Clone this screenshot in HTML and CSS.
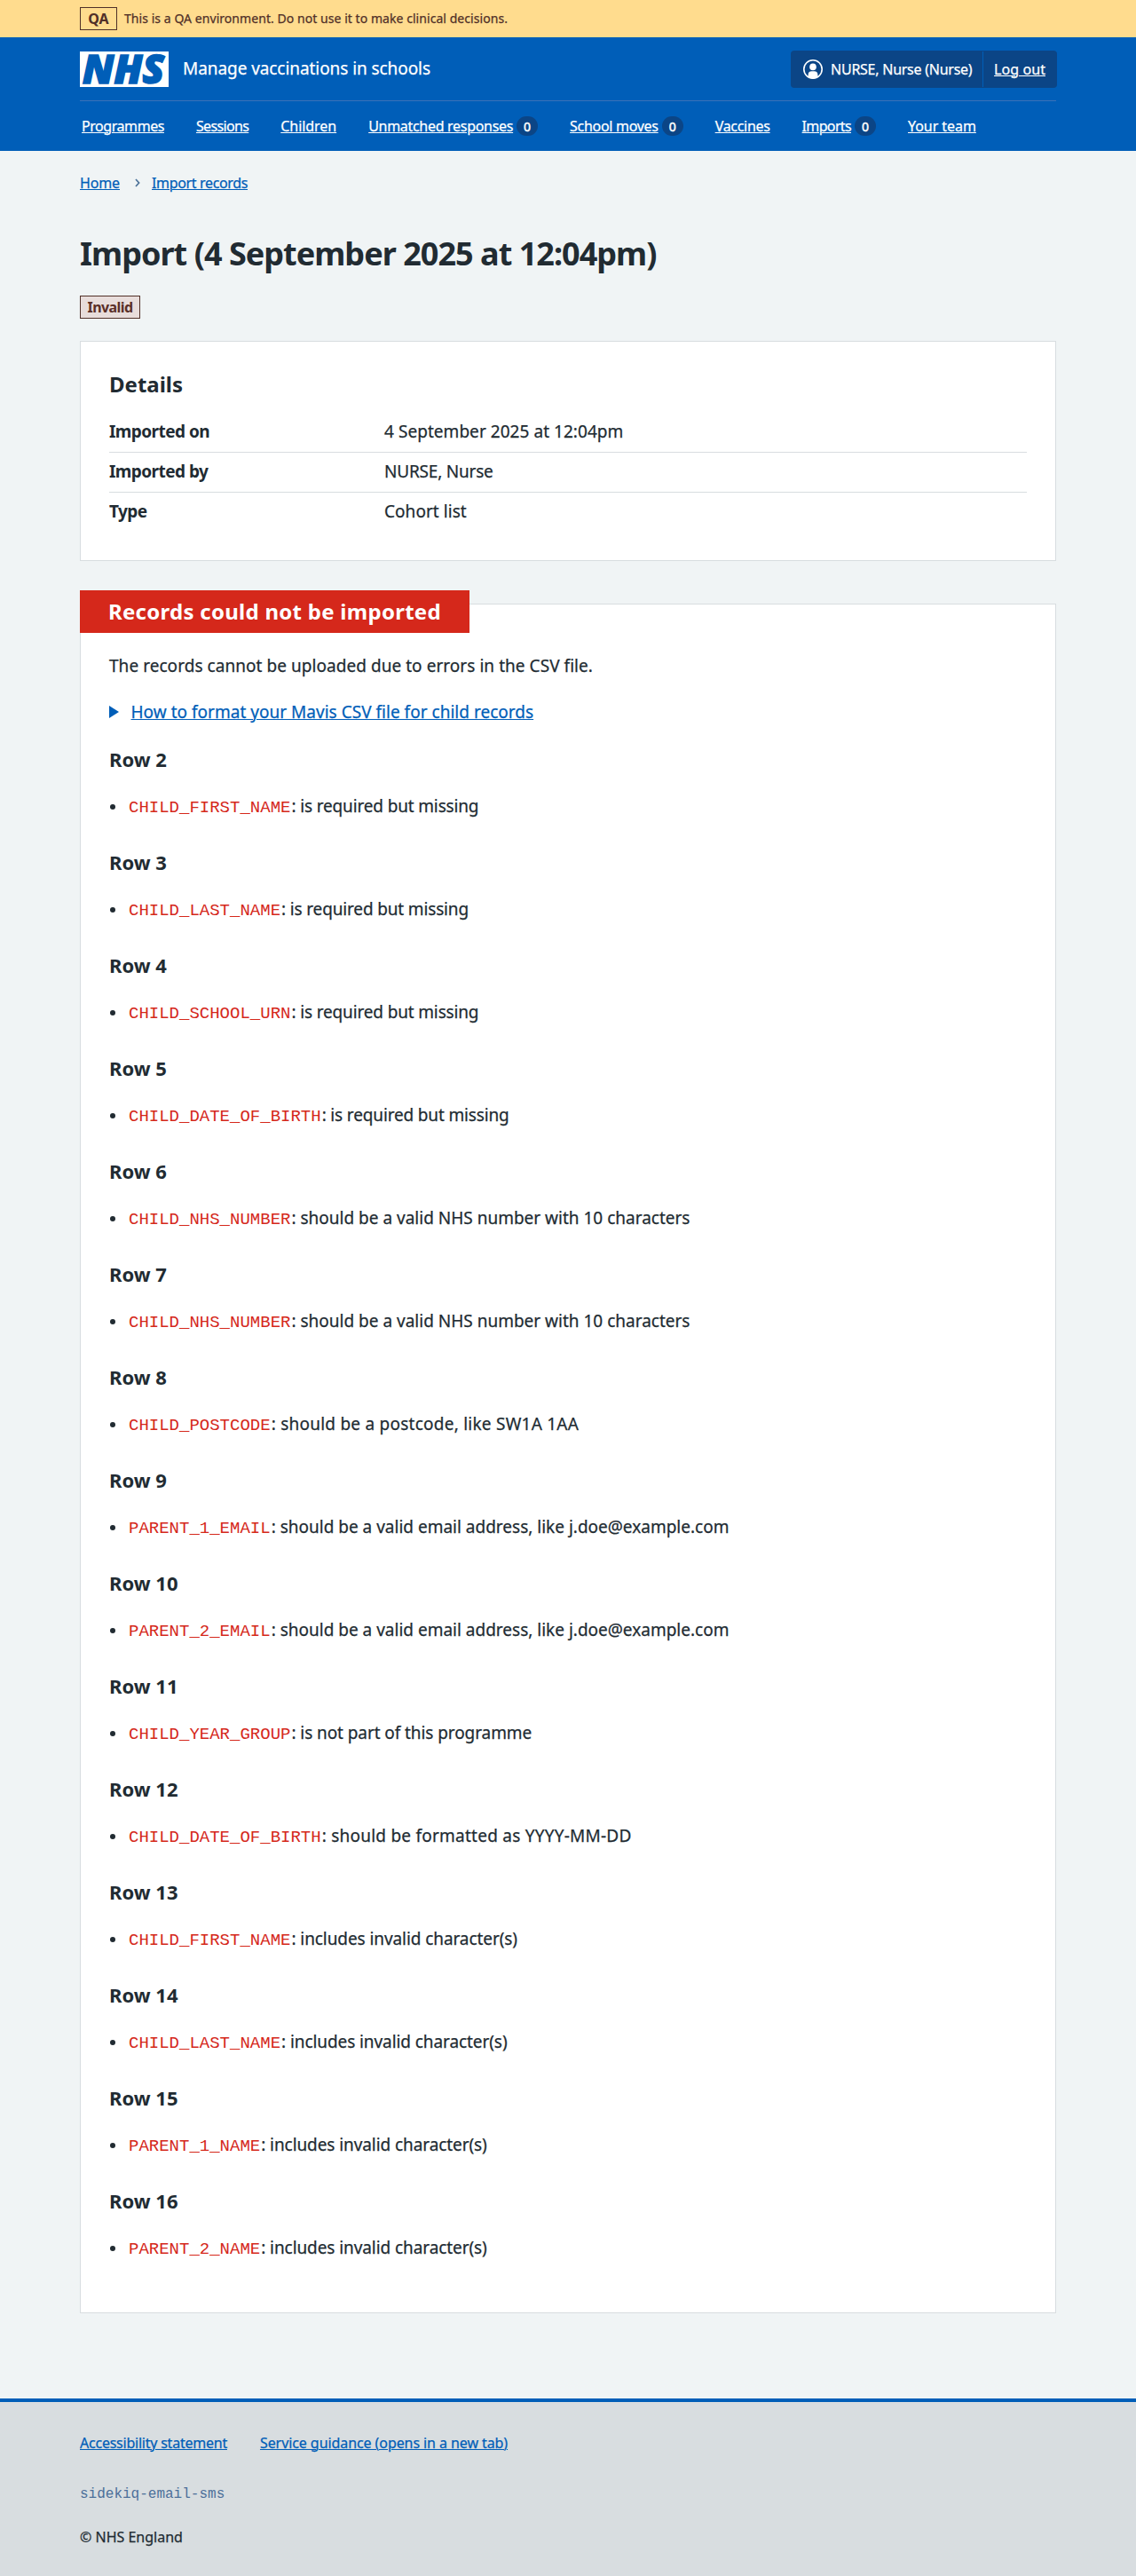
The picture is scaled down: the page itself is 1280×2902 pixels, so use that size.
FILE: index.html
```html
<!DOCTYPE html>
<html lang="en">
<head>
<meta charset="utf-8">
<title>Import (4 September 2025 at 12:04pm) - Manage vaccinations in schools</title>
<link rel="stylesheet" href="styles.css">
</head>
<body>
<div class="environment">
  <div class="container environment-inner">
    <strong class="environment-tag">QA</strong>
    <span class="environment-text">This is a QA environment. Do not use it to make clinical decisions.</span>
  </div>
</div>

<header class="header">
  <div class="container">
    <div class="header-top">
      <a class="header-service" href="#">
        <svg class="logo" width="100" height="40" viewBox="0 0 100 40" role="img" aria-label="NHS">
          <rect width="100" height="40" fill="#fff"/>
          <text class="logo-text" x="3" y="36" textLength="92" lengthAdjust="spacingAndGlyphs">NHS</text>
        </svg>
        <span class="service-name">Manage vaccinations in schools</span>
      </a>
      <div class="account">
        <div class="account-user">
          <svg class="account-icon" width="22" height="22" viewBox="0 0 22 22" aria-hidden="true">
            <circle cx="11" cy="11" r="10.2" fill="none" stroke="#fff" stroke-width="1.6"/>
            <circle cx="11" cy="8.4" r="3.8" fill="#fff"/>
            <path d="M5.6 20V17.2a4 4 0 0 1 4-4h2.8a4 4 0 0 1 4 4V20a10.3 10.3 0 0 1-10.8 0z" fill="#fff"/>
          </svg>
          <span class="account-name">NURSE, Nurse (Nurse)</span>
        </div>
        <a class="account-logout" href="#">Log out</a>
      </div>
    </div>
    <nav class="nav">
      <a class="nav-item" href="#"><span>Programmes</span></a>
      <a class="nav-item nav-tight" href="#"><span>Sessions</span></a>
      <a class="nav-item nav-natural" href="#"><span>Children</span></a>
      <a class="nav-item" href="#"><span>Unmatched responses</span><b class="badge">0</b></a>
      <a class="nav-item" href="#"><span>School moves</span><b class="badge">0</b></a>
      <a class="nav-item" href="#"><span>Vaccines</span></a>
      <a class="nav-item nav-tight" href="#"><span>Imports</span><b class="badge">0</b></a>
      <a class="nav-item nav-natural" href="#"><span>Your team</span></a>
    </nav>
  </div>
</header>

<div class="container page">
  <nav class="breadcrumb">
    <a class="breadcrumb-home" href="#">Home</a>
    <svg class="chevron" width="6" height="10" viewBox="0 0 6 10" aria-hidden="true"><path d="M1 1l3.6 4L1 9" fill="none" stroke="#4c7299" stroke-width="1.7"/></svg>
    <a class="breadcrumb-current" href="#">Import records</a>
  </nav>

  <main>
    <h1 class="title">Import (4 September 2025 at 12:04pm)</h1>
    <strong class="status">Invalid</strong>

    <section class="card">
      <h2 class="card-heading">Details</h2>
      <dl class="summary">
        <div class="summary-row"><dt>Imported on</dt><dd>4 September 2025 at 12:04pm</dd></div>
        <div class="summary-row"><dt>Imported by</dt><dd class="value-name">NURSE, Nurse</dd></div>
        <div class="summary-row"><dt>Type</dt><dd>Cohort list</dd></div>
      </dl>
    </section>

    <section class="card errors">
      <h2 class="errors-label">Records could not be imported</h2>
      <p class="errors-intro">The records cannot be uploaded due to errors in the CSV file.</p>
      <div class="details">
        <svg width="11" height="14" viewBox="0 0 11 14" aria-hidden="true"><path d="M0 0l11 7-11 7z" fill="#005eb8"/></svg>
        <a class="details-link" href="#">How to format your Mavis CSV file for child records</a>
      </div>

      <h3 class="row-heading">Row 2</h3>
      <ul class="row-errors"><li class="fit-a"><code>CHILD_FIRST_NAME</code>: is required but missing</li></ul>
      <h3 class="row-heading">Row 3</h3>
      <ul class="row-errors"><li class="fit-a"><code>CHILD_LAST_NAME</code>: is required but missing</li></ul>
      <h3 class="row-heading">Row 4</h3>
      <ul class="row-errors"><li class="fit-a"><code>CHILD_SCHOOL_URN</code>: is required but missing</li></ul>
      <h3 class="row-heading">Row 5</h3>
      <ul class="row-errors"><li class="fit-a"><code>CHILD_DATE_OF_BIRTH</code>: is required but missing</li></ul>
      <h3 class="row-heading">Row 6</h3>
      <ul class="row-errors"><li><code>CHILD_NHS_NUMBER</code>: should be a valid NHS number with 10 characters</li></ul>
      <h3 class="row-heading">Row 7</h3>
      <ul class="row-errors"><li><code>CHILD_NHS_NUMBER</code>: should be a valid NHS number with 10 characters</li></ul>
      <h3 class="row-heading">Row 8</h3>
      <ul class="row-errors"><li class="fit-c"><code>CHILD_POSTCODE</code>: should be a postcode, like SW1A 1AA</li></ul>
      <h3 class="row-heading">Row 9</h3>
      <ul class="row-errors"><li><code>PARENT_1_EMAIL</code>: should be a valid email address, like j.doe@example.com</li></ul>
      <h3 class="row-heading">Row 10</h3>
      <ul class="row-errors"><li><code>PARENT_2_EMAIL</code>: should be a valid email address, like j.doe@example.com</li></ul>
      <h3 class="row-heading">Row 11</h3>
      <ul class="row-errors"><li class="fit-b"><code>CHILD_YEAR_GROUP</code>: is not part of this programme</li></ul>
      <h3 class="row-heading">Row 12</h3>
      <ul class="row-errors"><li class="fit-c"><code>CHILD_DATE_OF_BIRTH</code>: should be formatted as YYYY-MM-DD</li></ul>
      <h3 class="row-heading">Row 13</h3>
      <ul class="row-errors"><li class="fit-b"><code>CHILD_FIRST_NAME</code>: includes invalid character(s)</li></ul>
      <h3 class="row-heading">Row 14</h3>
      <ul class="row-errors"><li class="fit-b"><code>CHILD_LAST_NAME</code>: includes invalid character(s)</li></ul>
      <h3 class="row-heading">Row 15</h3>
      <ul class="row-errors"><li class="fit-b"><code>PARENT_1_NAME</code>: includes invalid character(s)</li></ul>
      <h3 class="row-heading">Row 16</h3>
      <ul class="row-errors"><li class="fit-b"><code>PARENT_2_NAME</code>: includes invalid character(s)</li></ul>
    </section>
  </main>
</div>

<footer class="footer">
  <div class="container">
    <div class="footer-links">
      <a class="footer-accessibility" href="#">Accessibility statement</a>
      <a class="footer-guidance" href="#">Service guidance (opens in a new tab)</a>
    </div>
    <p class="footer-role">sidekiq-email-sms</p>
    <p class="footer-copyright">© NHS England</p>
  </div>
</footer>
</body>
</html>
```
FILE: styles.css
```css
* { box-sizing: border-box; }

body {
  margin: 0;
  background: #f0f4f5;
  color: #212b32;
  font: 19px/28px "Noto Sans", sans-serif;
  -webkit-text-stroke: 0.25px;
}

h1, h2, h3, p, ul, dl, dd { margin: 0; padding: 0; }
h1, h2, h3, dt, strong, code { -webkit-text-stroke: 0; }

a {
  color: #005eb8;
  text-decoration-thickness: 1px;
  text-underline-offset: 1px;
}

.container { width: 1100px; margin: 0 auto; }

/* Environment banner */
.environment { background: #ffdc8e; color: #513028; }
.environment-inner { display: flex; align-items: center; gap: 8px; height: 42px; }
.environment-tag {
  width: 42px;
  height: 26px;
  border: 1px solid #513028;
  font-size: 16px;
  line-height: 24px;
  text-align: center;
}
.environment-text { font-size: 14px; letter-spacing: 0.055px; }

/* Header */
.header { background: #005eb8; color: #fff; }
.header a { color: #fff; }
.header-top {
  display: flex;
  align-items: center;
  justify-content: space-between;
  height: 72px;
  padding-top: 1px;
  border-bottom: 1px solid #3a72b8;
}
.header-service { display: flex; align-items: center; gap: 16px; text-decoration: none; }
.logo { display: block; }
.logo-text {
  font: italic 800 45px "Open Sans", sans-serif;
  fill: #005eb8;
  stroke: #005eb8;
  stroke-width: 1.6px;
}
.service-name { margin-bottom: 2px; letter-spacing: -0.07px; }

.account {
  display: flex;
  height: 42px;
  margin-right: -1px;
  border-radius: 4px;
  background: #0b4586;
  font-size: 16px;
  line-height: 40px;
}
.account-user {
  display: flex;
  align-items: center;
  gap: 9px;
  width: 217px;
  margin: 1px 0;
  padding-left: 14px;
  border-right: 1px solid #005eb8;
}
.account-name { letter-spacing: -0.25px; white-space: nowrap; }
.account-logout { margin: 1px 0; padding: 0 13px 0 12px; letter-spacing: 0.08px; }

.nav {
  display: flex;
  align-items: center;
  gap: 36px;
  height: 56px;
  padding-left: 2px;
  font-size: 16px;
}
.nav-item { display: flex; align-items: center; gap: 4px; letter-spacing: -0.3px; text-decoration: none; }
.nav-item:first-child { letter-spacing: -0.44px; }
.nav-item span { text-decoration: underline 1px; text-underline-offset: 1px; }
.nav-tight { letter-spacing: -0.65px; }
.nav-natural { letter-spacing: -0.05px; }
.badge {
  width: 24px;
  height: 22px;
  border-radius: 12px;
  background: #0b4586;
  font-size: 14px;
  font-weight: 400;
  line-height: 23px;
  letter-spacing: 0;
  text-align: center;
  -webkit-text-stroke: 0.5px;
}

/* Page */
.page { padding: 24px 0 96px; }
.breadcrumb { display: flex; align-items: center; height: 24px; font-size: 16px; line-height: 24px; }
.chevron { margin: 0 13px 0 17px; }
.breadcrumb-home { letter-spacing: -0.13px; }
.breadcrumb-current { letter-spacing: -0.35px; }

.title { margin-top: 46px; font-size: 36px; line-height: 44px; letter-spacing: -0.97px; }
.status {
  display: block;
  width: 68px;
  height: 26px;
  margin-top: 25px;
  border: 1px solid #513028;
  background: #e8dddb;
  color: #5a2f28;
  font-size: 16px;
  line-height: 24px;
  letter-spacing: -0.6px;
  text-align: center;
}

/* Cards */
.card { margin-top: 25px; padding: 32px; border: 1px solid #d8dde0; background: #fff; }
.card-heading { margin-bottom: 16px; font-size: 24px; line-height: 32px; }
.summary-row { display: flex; padding: 7px 0 9px; border-bottom: 1px solid #d8dde0; }
.summary-row:last-child { border-bottom: 0; }
.summary dt { width: 310px; font-weight: 700; letter-spacing: -0.55px; }
.summary dd { letter-spacing: 0.05px; }
.summary .value-name { letter-spacing: -0.2px; }

.errors { margin-top: 48px; padding: 0 32px 58px; }
.errors-label {
  width: 439px;
  margin: -16px 0 23px -33px;
  padding-left: 32px;
  background: #d5281b;
  color: #fff;
  font-size: 24px;
  line-height: 48px;
  letter-spacing: 0.27px;
  white-space: nowrap;
}
.errors-intro { letter-spacing: 0.05px; }
.details { display: flex; align-items: center; gap: 13.5px; margin: 24px 0; }
.details-link { letter-spacing: 0.02px; }

.row-heading { font-size: 22px; line-height: 30px; }
.row-errors { margin: 24px 0 34px; list-style: none; }
.row-errors:last-child { margin-bottom: 0; padding-bottom: 1px; }
.row-errors li { display: flex; align-items: baseline; white-space: pre; }
.row-errors li::before {
  content: "";
  align-self: center;
  width: 6px;
  height: 6px;
  margin: 1px 15px 0 1px;
  border-radius: 50%;
  background: #212b32;
}
.row-errors code {
  margin-right: 1px;
  color: #d5281b;
  font: 19px/20px "Liberation Mono", monospace;
  letter-spacing: 0;
}
.fit-a { letter-spacing: -0.15px; }
.fit-b { letter-spacing: -0.08px; }
.fit-c { letter-spacing: 0.24px; }

/* Footer */
.footer {
  height: 200px;
  padding-top: 34px;
  border-top: 4px solid #005eb8;
  background: #d8dde0;
  font-size: 16px;
  line-height: 24px;
}
.footer-links { display: flex; gap: 37px; }
.footer-accessibility { letter-spacing: -0.23px; }
.footer-guidance { letter-spacing: -0.08px; }
.footer-role {
  margin: 34px 0 24px;
  color: #4c6f9a;
  font-family: "Liberation Mono", monospace;
  -webkit-text-stroke: 0;
}
```
